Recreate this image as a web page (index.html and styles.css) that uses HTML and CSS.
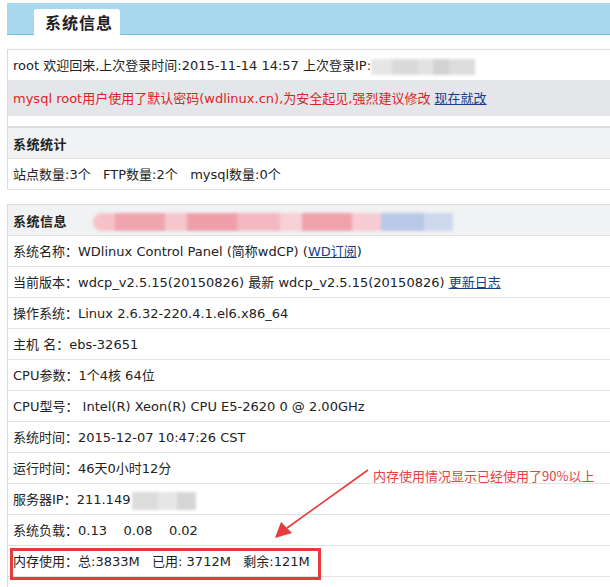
FILE: index.html
```html
<!DOCTYPE html>
<html lang="zh-CN">
<head>
  <meta charset="UTF-8" />
  <title>系统信息</title>
  <link rel="stylesheet" href="styles.css">
</head>
<body>

<div class="page">
  <div class="topbar">
    <span class="tab">系统信息</span>
  </div>

  <div class="panel">
    <div class="row">root 欢迎回来,上次登录时间:2015-11-14 14:57 上次登录IP:<span class="smudge smudge-ip"></span></div>
    <div class="row warn">mysql root用户使用了默认密码(wdlinux.cn),为安全起见,强烈建议修改 <a href="#">现在就改</a></div>
    <div class="spacer"></div>
  </div>

  <div class="panel">
    <div class="row head">系统统计</div>
    <div class="row">站点数量:3个&nbsp;&nbsp; FTP数量:2个&nbsp;&nbsp; mysql数量:0个</div>
  </div>

  <div class="panel gap">
    <div class="row head">系统信息<span class="smudge smudge-head"></span></div>
    <div class="row">系统名称：WDlinux Control Panel (简称wdCP) (<a href="#">WD订阅</a>)</div>
    <div class="row">当前版本：wdcp_v2.5.15(20150826) 最新 wdcp_v2.5.15(20150826) <a href="#">更新日志</a></div>
    <div class="row">操作系统：Linux 2.6.32-220.4.1.el6.x86_64</div>
    <div class="row">主机 名：ebs-32651</div>
    <div class="row">CPU参数：1个4核 64位</div>
    <div class="row">CPU型号： Intel(R) Xeon(R) CPU E5-2620 0 @ 2.00GHz</div>
    <div class="row">系统时间：2015-12-07 10:47:26 CST</div>
    <div class="row">运行时间：46天0小时12分</div>
    <div class="row">服务器IP：211.149<span class="smudge smudge-srv"></span></div>
    <div class="row">系统负载：0.13&nbsp;&nbsp;&nbsp; 0.08&nbsp;&nbsp;&nbsp; 0.02</div>
    <div class="row mark">内存使用：总:3833M&nbsp;&nbsp; 已用: 3712M&nbsp;&nbsp; 剩余:121M</div>
    <div class="row"></div>
  </div>

  <!-- 批注：箭头和说明文字 -->
  <div class="note">内存使用情况显示已经使用了90%以上</div>
  <svg class="arrow" width="110" height="80" viewBox="0 0 110 80">
    <line x1="101" y1="4" x2="20" y2="62" stroke="#e63c3c" stroke-width="1.6" />
    <polygon points="8,72 14,56 25,67" fill="#e63c3c" />
  </svg>
</div>

</body>
</html>
```

FILE: styles.css
```css
html, body {
  margin: 0;
  overflow: hidden;
}
body {
  font-family: "DejaVu Sans", "Noto Sans CJK SC", sans-serif;
  font-size: 13px;
  color: #222;
  background: #fff;
}
a {
  color: #173c8c;
  text-decoration: underline;
}
.page {
  position: relative;
  padding: 3px 0 0 7px;
}
.topbar {
  height: 32px;
  background: #a8d8ee;
  border-bottom: 1px solid #6ec3d6;
  box-sizing: border-box;
  padding: 6px 0 0 27px;
}
.tab {
  display: inline-block;
  width: 86px;
  height: 27px;
  box-sizing: border-box;
  padding-left: 11px;
  background: #fff;
  border-radius: 3px 3px 0 0;
  font-family: "Noto Sans CJK SC", sans-serif;
  font-size: 16px;
  font-weight: bold;
  line-height: 27px;
  letter-spacing: 1px;
  color: #222;
}
.panel {
  border-left: 1px solid #dcdcdc;
  border-top: 1px solid #dcdcdc;
}
.topbar + .panel {
  margin-top: 14px;
}
.panel.gap {
  margin-top: 14px;
}
.row {
  height: 28px;
  padding: 2px 0 0 5px;
  line-height: 28px;
  border-bottom: 1px solid #e2e2e2;
  white-space: nowrap;
  overflow: hidden;
}
.topbar + .panel .row {
  border-bottom: none;
}
.row.warn {
  height: 34px;
  line-height: 34px;
  background: #e4e6ea;
  color: #dd1f26;
}
.spacer {
  height: 10px;
  border-bottom: 1px solid #dcdcdc;
}
.row.head {
  background: #f1f2f4;
  font-family: "Noto Sans CJK SC", sans-serif;
  font-weight: bold;
  letter-spacing: 0.5px;
}
.mark {
  position: relative;
  overflow: visible;
}
.mark::after {
  content: "";
  position: absolute;
  left: 2px;
  top: 2px;
  width: 305px;
  height: 26px;
  border: 3px solid #e53b3b;
}

/* 打码遮挡 */
.smudge {
  display: inline-block;
  vertical-align: middle;
  filter: blur(1.5px);
}
.smudge-ip {
  width: 104px;
  height: 16px;
  background: linear-gradient(90deg, #e6e6e6 0 20%, #dadada 20% 45%, #e2e2e2 45% 60%, #d2d2d2 60% 75%, #dcdcdc 75% 100%);
}
.smudge-srv {
  width: 64px;
  height: 18px;
  margin-left: 2px;
  background: linear-gradient(90deg, #dcdcdc 0 40%, #e6e6e6 40% 70%, #d6d6d6 70% 100%);
}
.smudge-head {
  width: 360px;
  height: 18px;
  margin-left: 26px;
  border-radius: 9px 2px 2px 9px;
  background: linear-gradient(90deg, #f6c2c8 0 6%, #f0a4ae 6% 20%, #f4c6cc 20% 26%, #ef9faa 26% 40%, #f4b8c0 40% 52%, #f8d0d6 52% 58%, #f0a2ac 58% 72%, #f7ccd2 72% 80%, #b8c8e8 80% 92%, #cdd8ee 92% 100%);
}

.note {
  position: absolute;
  left: 373px;
  top: 466px;
  font-family: "Noto Sans CJK SC", sans-serif;
  font-size: 13px;
  color: #e8413f;
  white-space: nowrap;
}
.arrow {
  position: absolute;
  left: 267px;
  top: 466px;
}
```
